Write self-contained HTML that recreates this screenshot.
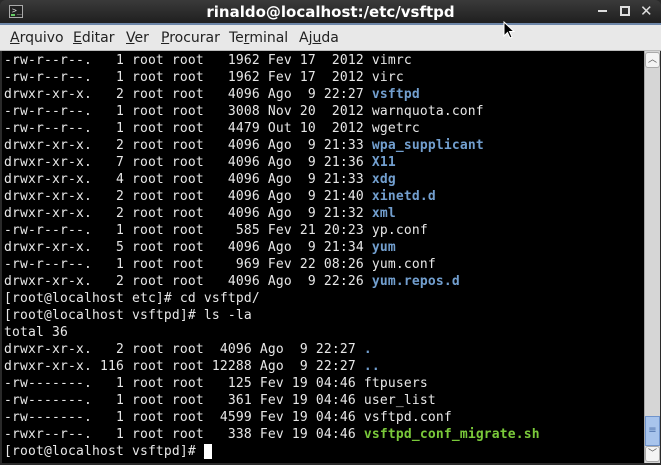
<!DOCTYPE html>
<html><head><meta charset="utf-8"><style>
*{margin:0;padding:0;box-sizing:border-box}
body{width:661px;height:465px;overflow:hidden;background:#2a2a2a;position:relative;font-family:"DejaVu Sans","Liberation Sans",sans-serif}
#title{position:absolute;left:0;top:0;width:661px;height:24px;background:linear-gradient(#3a3a3a,#1e1e1e);border-radius:6px 6px 0 0}
#title .t{position:absolute;left:0;right:0;top:3px;text-align:center;color:#fff;font-weight:bold;font-size:15px}
#title .ic{position:absolute;left:9px;top:5px;width:14px;height:13px;border:1px solid #aaa;background:#222}
#title .ic:after{content:"";position:absolute;left:1px;bottom:1px;width:4px;height:2px;background:#6c6}
#title .ic span{position:absolute;left:2px;top:0;color:#ddd;font-size:8px;font-family:"DejaVu Sans Mono",monospace}
#bl{position:absolute;left:0;top:23px;width:661px;height:2px;background:#6d86a8}
.wb{position:absolute;top:7px;color:#ddd}
#menu{position:absolute;left:0;top:25px;width:661px;height:26px;background:#e8e8e8;border-bottom:1px solid #bbb;font-size:14px;color:#222}
#menu span{position:absolute;top:5px}
#menu u{text-decoration:underline}
#term{position:absolute;left:2px;top:51px;width:642px;height:412px;background:#000;overflow:hidden}
pre{font-family:"DejaVu Sans Mono","Liberation Mono",monospace;font-size:13px;line-height:17px;letter-spacing:0.17px;color:#e8e8e8;position:absolute;left:2px;top:1px;white-space:pre}
.b{color:#729fcf;font-weight:bold}
.g{color:#7ac93a;font-weight:bold}
.cur{background:#fff;color:#fff}
#sb{position:absolute;left:644px;top:51px;width:16px;height:412px;background:#d6d6d6;border-left:1px solid #aaa}
#sb .up,#sb .dn{position:absolute;left:0;width:15px;height:16px;background:#f4f4f4;border:1px solid #aaa;border-radius:3px;font-size:9px;text-align:center;color:#555;line-height:14px}
#sb .up{top:1px}#sb .dn{top:395px}
#sb .th{position:absolute;left:0;top:365px;width:15px;height:30px;background:#a8c4ec;border:1px solid #7094cc;color:#4a6ea8;font-size:10px;text-align:center;line-height:28px}
</style></head><body>
<div id="title"><div class="ic"><span>&gt;_</span></div><div class="t">rinaldo@localhost:/etc/vsftpd</div>
<div class="wb" style="left:598px;top:10px;width:9px;height:2px;background:#ddd"></div>
<div class="wb" style="left:620px;top:6px;width:10px;height:10px;border:2px solid #ddd;border-top-width:2px"></div>
<div class="wb" style="left:640px;top:2px;font-size:15px;font-weight:bold">✕</div></div>
<div id="bl"></div>
<div id="menu">
<span style="left:10px"><u>A</u>rquivo</span><span style="left:73px"><u>E</u>ditar</span><span style="left:126px"><u>V</u>er</span><span style="left:161px"><u>P</u>rocurar</span><span style="left:229px">Te<u>r</u>minal</span><span style="left:299px">Aj<u>u</u>da</span>
</div>
<div id="term"><pre>
-rw-r--r--.   1 root root   1962 Fev 17  2012 vimrc
-rw-r--r--.   1 root root   1962 Fev 17  2012 virc
drwxr-xr-x.   2 root root   4096 Ago  9 22:27 <span class="b">vsftpd</span>
-rw-r--r--.   1 root root   3008 Nov 20  2012 warnquota.conf
-rw-r--r--.   1 root root   4479 Out 10  2012 wgetrc
drwxr-xr-x.   2 root root   4096 Ago  9 21:33 <span class="b">wpa_supplicant</span>
drwxr-xr-x.   7 root root   4096 Ago  9 21:36 <span class="b">X11</span>
drwxr-xr-x.   4 root root   4096 Ago  9 21:33 <span class="b">xdg</span>
drwxr-xr-x.   2 root root   4096 Ago  9 21:40 <span class="b">xinetd.d</span>
drwxr-xr-x.   2 root root   4096 Ago  9 21:32 <span class="b">xml</span>
-rw-r--r--.   1 root root    585 Fev 21 20:23 yp.conf
drwxr-xr-x.   5 root root   4096 Ago  9 21:34 <span class="b">yum</span>
-rw-r--r--.   1 root root    969 Fev 22 08:26 yum.conf
drwxr-xr-x.   2 root root   4096 Ago  9 22:26 <span class="b">yum.repos.d</span>
[root@localhost etc]# cd vsftpd/
[root@localhost vsftpd]# ls -la
total 36
drwxr-xr-x.   2 root root  4096 Ago  9 22:27 <span class="b">.</span>
drwxr-xr-x. 116 root root 12288 Ago  9 22:27 <span class="b">..</span>
-rw-------.   1 root root   125 Fev 19 04:46 ftpusers
-rw-------.   1 root root   361 Fev 19 04:46 user_list
-rw-------.   1 root root  4599 Fev 19 04:46 vsftpd.conf
-rwxr--r--.   1 root root   338 Fev 19 04:46 <span class="g">vsftpd_conf_migrate.sh</span>
[root@localhost vsftpd]# <span class="cur">_</span></pre></div>
<div id="sb"><div class="up">︿</div><div class="th">≡</div><div class="dn">﹀</div></div>
<svg style="position:absolute;left:503px;top:21px" width="12" height="20" viewBox="0 0 12 20"><path d="M1 1 L1 15 L4.5 11.5 L7 17 L9 16 L6.5 10.5 L11 10.5 Z" fill="#000" stroke="#fff" stroke-width="1"/></svg>
</body></html>
